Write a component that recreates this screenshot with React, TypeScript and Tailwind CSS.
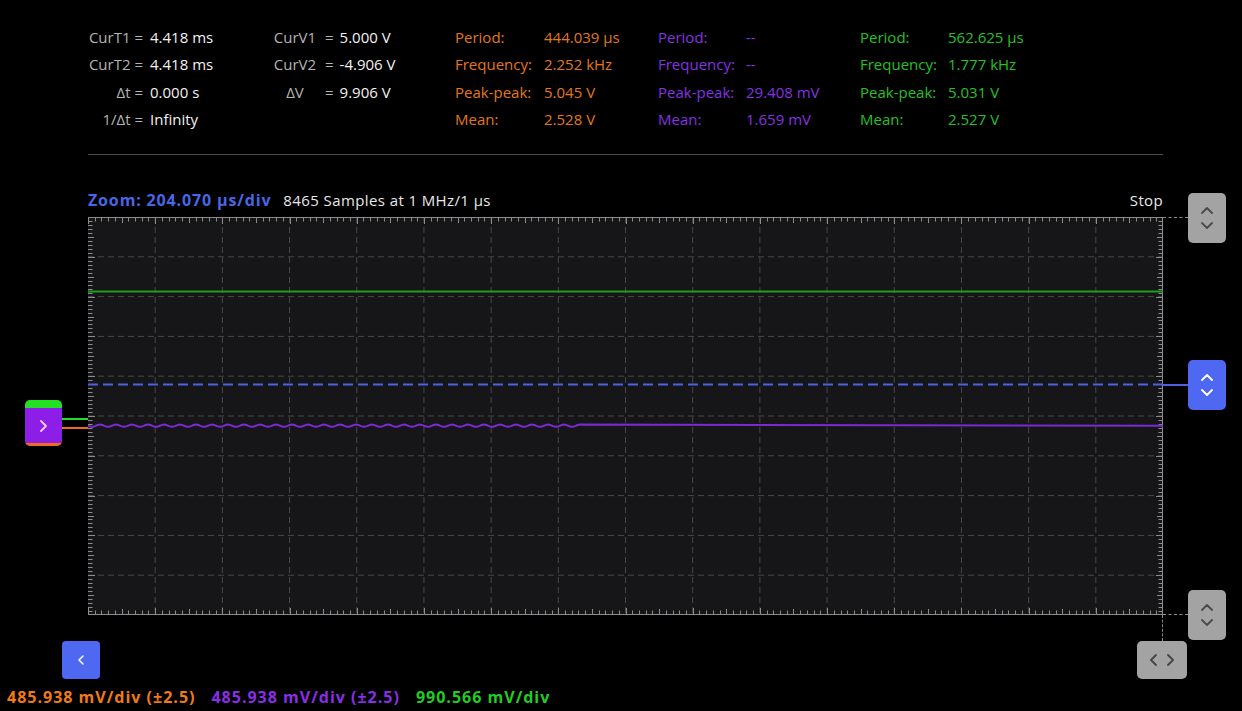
import { ChevronLeft } from 'lucide-react';

const cursorRows = [
  { label: 'CurT1 =', value: '4.418 ms' },
  { label: 'CurT2 =', value: '4.418 ms' },
  { label: 'Δt =', value: '0.000 s' },
  { label: '1/Δt =', value: 'Infinity' },
];

const voltRows = [
  { label: 'CurV1', value: '5.000 V' },
  { label: 'CurV2', value: '-4.906 V' },
  { label: 'ΔV', value: '9.906 V' },
];

const labels = ['Period:', 'Frequency:', 'Peak-peak:', 'Mean:'];
const orangeVals = ['444.039 µs', '2.252 kHz', '5.045 V', '2.528 V'];
const purpleVals = ['--', '--', '29.408 mV', '1.659 mV'];
const greenVals = ['562.625 µs', '1.777 kHz', '5.031 V', '2.527 V'];

const W = 1075;
const H = 398;

function wavePath() {
  const y = 208.7;
  let d = `M0 ${y}`;
  for (let x = 0; x <= 492; x += 1.5) {
    d += ` L${x} ${(y + Math.sin((x / 16) * Math.PI * 2) * 1.1).toFixed(2)}`;
  }
  d += ` L${W} ${y}`;
  return d;
}

const Chev = ({ dir, color }: { dir: 'up' | 'down' | 'left' | 'right'; color: string }) => {
  const pts = {
    up: '1,6 6,1 11,6',
    down: '1,1 6,6 11,1',
    left: '6,1 1,6 6,11',
    right: '1,1 6,6 1,11',
  }[dir];
  const vertical = dir === 'up' || dir === 'down';
  return (
    <svg width={vertical ? 12 : 7} height={vertical ? 7 : 12} viewBox={vertical ? '0 0 12 7' : '0 0 7 12'}>
      <polyline points={pts} fill="none" stroke={color} strokeWidth="1.8" strokeLinecap="round" strokeLinejoin="round" />
    </svg>
  );
};

const Plot = () => {
  const vx = Array.from({ length: 15 }, (_, i) => ((i + 1) * W) / 16);
  const hy = Array.from({ length: 9 }, (_, i) => ((i + 1) * H) / 10);
  const topTicks = Array.from({ length: 161 }, (_, k) => k);
  const sideTicks = Array.from({ length: 101 }, (_, k) => k);
  return (
    <svg width={W} height={H} className="block">
      <rect x="0" y="0" width={W} height={H} fill="#161618" />
      {vx.map((x) => (
        <line key={'v' + x} x1={x} y1={0} x2={x} y2={H} stroke="#48484a" strokeWidth="1" strokeDasharray="6 4" />
      ))}
      {hy.map((y) => (
        <line key={'h' + y} x1={0} y1={y} x2={W} y2={y} stroke="#48484a" strokeWidth="1" strokeDasharray="6 4" />
      ))}
      {/* edge ticks */}
      <line x1={0} y1={0.5} x2={W} y2={0.5} stroke="#8c8c8c" strokeWidth="1" />
      <line x1={0} y1={H - 0.5} x2={W} y2={H - 0.5} stroke="#8c8c8c" strokeWidth="1" />
      <line x1={W - 0.5} y1={0} x2={W - 0.5} y2={H} stroke="#8c8c8c" strokeWidth="1" />
      {topTicks.map((k) => {
        const x = Math.round((k * W) / 160) + 0.5;
        const len = k % 10 === 0 ? 7 : k % 5 === 0 ? 6 : 4.5;
        return (
          <g key={'t' + k}>
            <line x1={x} y1={0} x2={x} y2={len} stroke="#8c8c8c" strokeWidth="1" />
            <line x1={x} y1={H} x2={x} y2={H - len} stroke="#8c8c8c" strokeWidth="1" />
          </g>
        );
      })}
      {sideTicks.map((k) => {
        const y = Math.round((k * H) / 100) + 0.5;
        const len = k % 10 === 0 ? 7 : k % 5 === 0 ? 6 : 4.5;
        return (
          <g key={'s' + k}>
            <line x1={0} y1={y} x2={len} y2={y} stroke="#8c8c8c" strokeWidth="1" />
            <line x1={W} y1={y} x2={W - len} y2={y} stroke="#8c8c8c" strokeWidth="1" />
          </g>
        );
      })}
      {/* traces */}
      <line x1={0} y1={74.5} x2={W} y2={74.5} stroke="#1e9e1e" strokeWidth="2" />
      <line x1={0} y1={167.5} x2={W} y2={167.5} stroke="#4b63e2" strokeWidth="2" strokeDasharray="10 5" />
      <path d={wavePath()} fill="none" stroke="#7a2ad0" strokeWidth="2" />
    </svg>
  );
};

export default function App() {
  return (
    <div className="w-[1242px] h-[711px] bg-black overflow-hidden font-['Open_Sans',sans-serif] text-[15px]">
      {/* measurements */}
      <div className="flex h-[154px] pl-[88px] pt-[24px] leading-[27.3px]">
        <div className="w-[185px]">
          {cursorRows.map((r) => (
            <div key={r.label} className="flex">
              <span className="w-[55px] text-right text-[#b4b4b4]">{r.label}</span>
              <span className="ml-[7px] text-[#f2f2f2]">{r.value}</span>
            </div>
          ))}
        </div>
        <div className="w-[182px]">
          {voltRows.map((r) => (
            <div key={r.label} className="flex">
              <span className="w-[44px] text-center text-[#b4b4b4]">{r.label}</span>
              <span className="ml-[8px] text-[#b4b4b4]">=</span>
              <span className="ml-[6px] text-[#f2f2f2]">{r.value}</span>
            </div>
          ))}
        </div>
        <div className="w-[203px] text-[#e2781e]">
          {labels.map((l, i) => (
            <div key={l} className="flex">
              <span className="w-[89px]">{l}</span>
              <span>{orangeVals[i]}</span>
            </div>
          ))}
        </div>
        <div className="w-[202px] text-[#8533e0]">
          {labels.map((l, i) => (
            <div key={l} className="flex">
              <span className="w-[88px]">{l}</span>
              <span>{purpleVals[i]}</span>
            </div>
          ))}
        </div>
        <div className="text-[#25c025]">
          {labels.map((l, i) => (
            <div key={l} className="flex">
              <span className="w-[88px]">{l}</span>
              <span>{greenVals[i]}</span>
            </div>
          ))}
        </div>
      </div>
      <div className="ml-[88px] w-[1075px] h-px bg-[#4e4e4e]" />

      {/* zoom header */}
      <div className="ml-[88px] mt-[34px] w-[1075px] h-[22px] flex items-center justify-between leading-[22px]">
        <div className="flex items-center">
          <span className="font-bold text-[16px] tracking-[0.85px] text-[#4a66e6]">Zoom: 204.070 µs/div</span>
          <span className="ml-[12px] tracking-[0.4px] text-[#e8e8e8]">8465 Samples at 1 MHz/1 µs</span>
        </div>
        <span className="tracking-[0.35px] text-[#e8e8e8]">Stop</span>
      </div>

      {/* plot row */}
      <div className="relative mt-[6px] w-[1242px] h-[398px]">
        <div className="ml-[88px] w-[1075px]">
          <Plot />
        </div>

        {/* left channel handle */}
        <div className="absolute left-[62px] top-[201px] w-[26px] h-[2px] bg-[#22dd22]" />
        <div className="absolute left-[62px] top-[210px] w-[26px] h-[2px] bg-[#f26a1f]" />
        <div className="absolute left-[25px] top-[183px] w-[37px] h-[46px] rounded-[5px] overflow-hidden flex flex-col">
          <div className="h-[8px] bg-[#22e022]" />
          <div className="flex-1 bg-[#8d1ee8] flex items-center justify-center">
            <Chev dir="right" color="#f4c8f6" />
          </div>
          <div className="h-[3px] bg-[#f26a1f]" />
        </div>

        {/* right handles */}
        <div className="absolute left-[1163px] top-[0px] w-[25px] border-t border-dashed border-[#8c8c8c]" />
        <div className="absolute left-[1163px] top-[397px] w-[25px] border-t border-dashed border-[#8c8c8c]" />
        <div className="absolute left-[1162px] top-[398px] h-[26px] border-l border-dashed border-[#8c8c8c]" />
        <div className="absolute left-[1163px] top-[167px] w-[25px] h-[2px] bg-[#4b63e2]" />

        <div className="absolute left-[1188px] top-[-24px] w-[38px] h-[50px] rounded-[5px] bg-[#a3a3a3] flex flex-col items-center justify-center gap-[8px]">
          <Chev dir="up" color="#4a4a4a" />
          <Chev dir="down" color="#4a4a4a" />
        </div>
        <div className="absolute left-[1188px] top-[143px] w-[38px] h-[50px] rounded-[5px] bg-[#4f68f2] flex flex-col items-center justify-center gap-[8px]">
          <Chev dir="up" color="#ffffff" />
          <Chev dir="down" color="#ffffff" />
        </div>
        <div className="absolute left-[1188px] top-[373px] w-[38px] h-[50px] rounded-[5px] bg-[#a3a3a3] flex flex-col items-center justify-center gap-[8px]">
          <Chev dir="up" color="#4a4a4a" />
          <Chev dir="down" color="#4a4a4a" />
        </div>
      </div>

      {/* bottom buttons */}
      <div className="flex h-[70px] pt-[26px]">
        <div className="ml-[62px] w-[38px] h-[38px] rounded-[4px] bg-[#4f68f2] flex items-center justify-center">
          <ChevronLeft size={16} strokeWidth={2.2} color="#ffffff" />
        </div>
        <div className="ml-auto mr-[55px] w-[50px] h-[38px] rounded-[5px] bg-[#a3a3a3] flex items-center justify-center gap-[10px]">
          <Chev dir="left" color="#444444" />
          <Chev dir="right" color="#444444" />
        </div>
      </div>

      {/* scale labels */}
      <div className="flex items-center h-[24px] pl-[7px] gap-[16px] font-bold text-[16px] tracking-[1px]">
        <span className="text-[#f07a18]">485.938 mV/div (±2.5)</span>
        <span className="text-[#8a2ee6]">485.938 mV/div (±2.5)</span>
        <span className="text-[#22cc22]">990.566 mV/div</span>
      </div>
    </div>
  );
}
